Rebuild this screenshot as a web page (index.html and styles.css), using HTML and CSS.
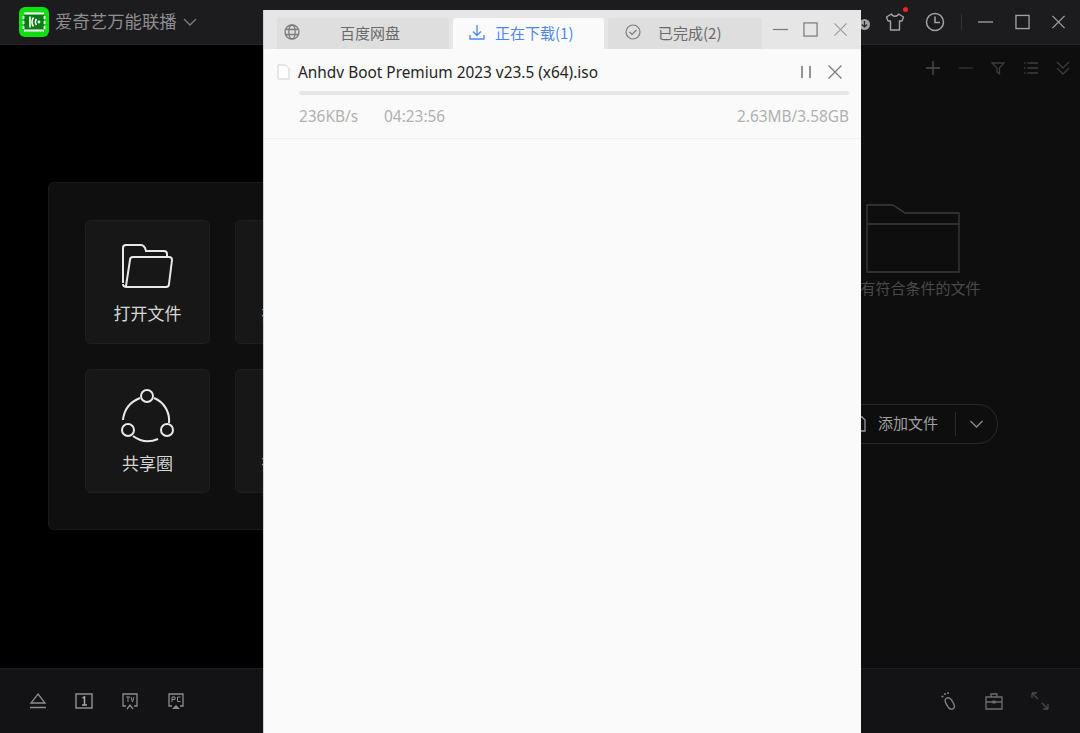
FILE: index.html
```html
<!DOCTYPE html>
<html lang="zh">
<head>
<meta charset="utf-8">
<title>爱奇艺万能联播</title>
<link rel="stylesheet" href="styles.css">
</head>
<body>
<div class="app">
  <header class="topbar">
    <div class="brand">
      <svg class="logo" viewBox="0 0 30 30"><rect width="30" height="30" rx="6" fill="#10e010"/><rect x="5" y="6" width="20" height="18" fill="#0a7a14"/><path d="M5 6.500H25M5 23.500H25" stroke="#fff" stroke-width="1.800"/><path d="M4.500 9V12M4.500 14V17M4.500 19V22M25.500 9V12M25.500 14V17M25.500 19V22" stroke="#fff" stroke-width="1.800"/><path d="M11 9.500V20.500M14.500 10.500C12.500 13 12.500 17 14.500 19.500M17.500 12C16 14 16 16 17.500 18" stroke="#fff" stroke-width="1.600" fill="none"/><circle cx="20" cy="15" r="1.400" fill="#fff"/></svg>
      <span class="brand-name">爱奇艺万能联播</span>
      <svg class="brand-caret" viewBox="0 0 14 8"><path d="M1 1L7 7L13 1" fill="none" stroke="#7d7d7d" stroke-width="1.300"/></svg>
    </div>
    <div class="top-actions">
      <svg class="ti dl-badge" viewBox="0 0 11 11"><circle cx="5.500" cy="5.500" r="5.500" fill="#a0a0a0"/><path d="M5.500 2V8M3 5.500L5.500 8L8 5.500" fill="none" stroke="#222" stroke-width="1.200"/></svg>
      <div class="shirt-wrap">
        <svg class="ti" viewBox="0 0 20 20"><path d="M6.500 2L1.500 5L3 9H5.500V18H14.500V9H17L18.500 5L13.500 2C12.500 5 7.500 5 6.500 2Z" fill="none" stroke="#a3a3a3" stroke-width="1.400" stroke-linejoin="round"/></svg>
        <span class="red-dot"></span>
      </div>
      <svg class="ti clock" viewBox="0 0 20 20"><circle cx="10" cy="10" r="8.500" fill="none" stroke="#a3a3a3" stroke-width="1.500"/><path d="M10 4.500V10.500H15" fill="none" stroke="#a3a3a3" stroke-width="1.500"/></svg>
      <span class="top-sep"></span>
      <svg class="ti min" viewBox="0 0 16 16"><path d="M0 8H16" stroke="#a3a3a3" stroke-width="1.400"/></svg>
      <svg class="ti max" viewBox="0 0 16 16"><rect x="1" y="1" width="14" height="14" fill="none" stroke="#a3a3a3" stroke-width="1.400"/></svg>
      <svg class="ti cls" viewBox="0 0 16 16"><path d="M1.500 1.500L14.500 14.500M14.500 1.500L1.500 14.500" stroke="#a3a3a3" stroke-width="1.300"/></svg>
    </div>
  </header>

  <main class="main">
    <section class="left">
      <div class="panel">
        <div class="card">
          <svg class="card-icon" viewBox="0 0 54 46"><path d="M3 40V5C3 3 4 2 6 2H21C23 2 24 3 25 5L26 8H44C46 8 47 9 47 11V13M3 41C3 43 5 44 7 44H46C48 44 49 43 49 41L52 17C52 15 51 14 49 14H13C11 14 10 15 10 17L6 43" fill="none" stroke="#e8e8e8" stroke-width="2"/></svg>
          <span class="card-label">打开文件</span>
        </div>
        <div class="card"><span class="card-spacer"></span><span class="card-label card-label-hidden">扫码投屏</span></div>
        <div class="card">
          <svg class="card-icon" viewBox="0 0 54 54"><g fill="none" stroke="#e8e8e8" stroke-width="2"><circle cx="27" cy="7" r="6"/><circle cx="8" cy="41" r="6"/><circle cx="47" cy="41" r="6"/><path d="M20 9C10 13 4 21 3 31M34 9C44 13 50 23 49 34M13 47C21 53 29 54 38 50"/></g></svg>
          <span class="card-label">共享圈</span>
        </div>
        <div class="card"><span class="card-spacer"></span><span class="card-label card-label-hidden">扫码投屏</span></div>
      </div>
    </section>

    <section class="right">
      <div class="tools">
        <svg class="tool" viewBox="0 0 16 16"><path d="M8 1V15M1 8H15" stroke="#4d4d4d" stroke-width="1.300"/></svg>
        <svg class="tool" viewBox="0 0 16 16"><path d="M1 8H15" stroke="#333" stroke-width="1.300"/></svg>
        <svg class="tool" viewBox="0 0 16 16"><path d="M2 3H14L9.500 8V14L7 12V8Z" fill="none" stroke="#3d3d3d" stroke-width="1.300"/></svg>
        <svg class="tool" viewBox="0 0 16 16"><path d="M4.500 3H15M4.500 8H15M4.500 13H15M1 3H2.500M1 8H2.500M1 13H2.500" stroke="#3d3d3d" stroke-width="1.300"/></svg>
        <svg class="tool" viewBox="0 0 16 16"><path d="M2 2L8 8L14 2M2 8L8 14L14 8" fill="none" stroke="#3d3d3d" stroke-width="1.300"/></svg>
      </div>
      <div class="empty">
        <svg class="empty-folder" viewBox="0 0 94 69"><path d="M1 1H27L39 9H93V68H1ZM1 20H93" fill="none" stroke="#3b3b3b" stroke-width="1.300"/></svg>
        <p class="empty-text">没有符合条件的文件</p>
        <div class="add-btn">
          <svg class="add-icon" viewBox="0 0 16 16"><path d="M3 1H10L13 4V15H3Z" fill="none" stroke="#9a9a9a" stroke-width="1.300"/></svg>
          <span class="add-label">添加文件</span>
          <span class="add-sep"></span>
          <svg class="add-caret" viewBox="0 0 14 8"><path d="M1 1L7 7L13 1" fill="none" stroke="#8c8c8c" stroke-width="1.300"/></svg>
        </div>
      </div>
    </section>
  </main>

  <footer class="bottombar">
    <div class="bottom-group">
      <svg class="bi" viewBox="0 0 20 18"><path d="M10 2L17 11H3ZM2 15.500H18" fill="none" stroke="#8c8c8c" stroke-width="1.300"/></svg>
      <svg class="bi" viewBox="0 0 20 18"><rect x="2" y="2" width="16" height="14" fill="none" stroke="#8c8c8c" stroke-width="1.500"/><path d="M8.500 6L10.500 5V13M8 13H13" fill="none" stroke="#a8a8a8" stroke-width="1.500"/></svg>
      <svg class="bi" viewBox="0 0 20 18"><path d="M6 14H3V2H17V14H14M7 17L10 13L13 17" fill="none" stroke="#8c8c8c" stroke-width="1.300"/><path d="M6 5H10M8 5V10M11 5L12.500 10L14 5" fill="none" stroke="#8c8c8c"/></svg>
      <svg class="bi" viewBox="0 0 20 18"><path d="M6 14H3V2H17V14H14" fill="none" stroke="#8c8c8c" stroke-width="1.300"/><path d="M6 17L10 13L14 17Z" fill="#8c8c8c"/><path d="M6 10V5H9V7.500H6M14.500 5H11.500V9.500H14.500" fill="none" stroke="#8c8c8c"/></svg>
    </div>
    <div class="bottom-group">
      <svg class="bi" viewBox="0 0 20 20"><path d="M8 7.500C6 9 7.500 12 9.500 15C11 18.500 14.500 19 16 17C17.500 15 15.500 12.500 14.500 10.500C13.500 8 10.500 5.500 8 7.500Z" fill="none" stroke="#7a7a7a" stroke-width="1.500"/><circle cx="7" cy="3" r="1.100" fill="#7a7a7a"/><circle cx="10" cy="2" r="1.100" fill="#7a7a7a"/><circle cx="4.500" cy="5.500" r="1.100" fill="#7a7a7a"/></svg>
      <svg class="bi" viewBox="0 0 20 20"><path d="M2 6H18V18H2ZM2 11H18M7 6V3H13V6" fill="none" stroke="#6e6e6e" stroke-width="1.300"/><rect x="8.500" y="9.500" width="3" height="3" fill="#6e6e6e"/></svg>
      <svg class="bi" viewBox="0 0 20 20"><path d="M2 2L8 8M2 2V7M2 2H7M18 18L12 12M18 18V13M18 18H13" fill="none" stroke="#4a4a4a" stroke-width="1.300"/></svg>
    </div>
  </footer>
</div>

<div class="window">
  <div class="titlebar">
    <div class="tab tab-one">
      <svg class="tab-icon" viewBox="0 0 16 16"><g fill="none" stroke="#7d7d7d" stroke-width="1.300"><circle cx="8" cy="8" r="7"/><ellipse cx="8" cy="8" rx="3.200" ry="7"/><path d="M1.500 5.500H14.500M1.500 10.500H14.500"/></g></svg>
      <span class="tab-text">百度网盘</span>
    </div>
    <div class="tab tab-active">
      <svg class="tab-icon" viewBox="0 0 16 16"><path d="M8 1V11M4 7.500L8 11.500L12 7.500M1 11V15H15V11" fill="none" stroke="#4d86f0" stroke-width="1.300"/></svg>
      <span class="tab-text">正在下载(1)</span>
    </div>
    <div class="tab tab-three">
      <svg class="tab-icon" viewBox="0 0 16 16"><circle cx="8" cy="8" r="7" fill="none" stroke="#7d7d7d" stroke-width="1.200"/><path d="M4.500 8L7 10.500L11.500 6" fill="none" stroke="#7d7d7d" stroke-width="1.200"/></svg>
      <span class="tab-text">已完成(2)</span>
    </div>
    <div class="win-controls">
      <svg class="wc" viewBox="0 0 16 16"><path d="M0 8H16" stroke="#7a7a7a" stroke-width="1.300"/></svg>
      <svg class="wc" viewBox="0 0 16 16"><rect x="1" y="1" width="14" height="14" fill="none" stroke="#7a7a7a" stroke-width="1.300"/></svg>
      <svg class="wc" viewBox="0 0 16 16"><path d="M1.500 1.500L14.500 14.500M14.500 1.500L1.500 14.500" stroke="#9a9a9a" stroke-width="1.200"/></svg>
    </div>
  </div>
  <div class="dl-item">
    <div class="dl-head">
      <svg class="dl-file" viewBox="0 0 13 16"><path d="M1 1H8.500L12 4.500V15H1Z" fill="#fff" stroke="#cfcfcf"/></svg>
      <span class="dl-name">Anhdv Boot Premium 2023 v23.5 (x64).iso</span>
      <svg class="dl-pause" viewBox="0 0 12 14"><path d="M2 1V13M10 1V13" stroke="#6a6a6a" stroke-width="1.400"/></svg>
      <svg class="dl-close" viewBox="0 0 16 16"><path d="M1.500 1.500L14.500 14.500M14.500 1.500L1.500 14.500" stroke="#7a7a7a" stroke-width="1.200"/></svg>
    </div>
    <div class="dl-body">
      <div class="progress"></div>
      <div class="dl-stats">
        <span class="dl-speed">236KB/s</span>
        <span class="dl-time">04:23:56</span>
        <span class="dl-size">2.63MB/3.58GB</span>
      </div>
    </div>
  </div>
</div>
</body>
</html>
```

FILE: styles.css
```css
* { box-sizing: border-box; }
html, body { margin: 0; height: 100%; overflow: hidden; background: #000; }
body { font-family: "Noto Sans", "Noto Sans CJK SC", sans-serif; position: relative; }
svg { display: block; flex: none; }

.app { display: flex; flex-direction: column; height: 733px; }

.topbar { height: 45px; flex: none; display: flex; align-items: center; justify-content: space-between; background: #1c1c1e; border-bottom: 1px solid #262628; padding: 0 14px 0 19px; }
.brand { display: flex; align-items: center; }
.logo { width: 30px; height: 30px; }
.brand-name { margin: 0 0 3px 6px; font-size: 17.400px; color: #8e8e8e; font-family: "Noto Sans CJK SC", sans-serif; }
.brand-caret { width: 14px; height: 8px; margin: 0 0 1px 6px; }
.top-actions { display: flex; align-items: center; }
.ti { width: 20px; height: 20px; }
.top-actions .dl-badge { width: 11px; height: 11px; margin: 4px 15px 0 0; }
.shirt-wrap { position: relative; }
.red-dot { position: absolute; right: -3px; top: -5px; width: 5px; height: 5px; border-radius: 50%; background: #e8262c; }
.top-actions .clock { margin-left: 20px; }
.top-sep { width: 1px; height: 16px; background: #333; margin-left: 16px; }
.top-actions .min { width: 15px; height: 16px; margin-left: 16px; }
.top-actions .max { width: 15px; height: 16px; margin-left: 22px; }
.top-actions .cls { width: 15px; height: 16px; margin-left: 21px; }

.main { flex: 1; min-height: 0; display: flex; }
.left { width: 746px; flex: none; background: #000; padding: 137px 0 0 48px; }
.panel { width: 349px; height: 348px; background: #0f0f0f; border: 1px solid #1a1a1a; border-radius: 6px; padding: 37px 36px; display: grid; grid-template-columns: 125px 125px; grid-auto-rows: 124px; gap: 25px; }
.card { background: #171717; border: 1px solid #1f1f1f; border-radius: 6px; display: flex; flex-direction: column; align-items: center; padding: 22px 2px 0 0; }
.card-icon { width: 54px; height: 46px; }
.card:nth-child(3) { padding: 19px 0 0; }
.card:nth-child(3) .card-icon { height: 54px; margin-left: -1px; }
.card-spacer { height: 46px; }
.card-label { margin: 13px -2px 0 0; font-size: 17px; line-height: 22px; color: #d6d6d6; font-family: "Noto Sans CJK SC", sans-serif; }
.card-label-hidden { font-size: 18px; }
.card:nth-child(3) .card-label { margin: 9px 0 0; }

.right { flex: 1; min-width: 0; background: #0e0e0e; display: flex; flex-direction: column; }
.tools { display: flex; justify-content: flex-end; gap: 16.500px; padding: 15px 9px 0 0; }
.tool { width: 16px; height: 16px; }
.empty { display: flex; flex-direction: column; align-items: center; padding-top: 128px; }
.empty-folder { width: 94px; height: 69px; }
.empty-text { margin: 4px 0 0; font-size: 15px; line-height: 22px; color: #4a4a4a; font-family: "Noto Sans CJK SC", sans-serif; }
.add-btn { margin-top: 105px; width: 170px; height: 40px; flex: none; border: 1px solid #2a2a2a; border-radius: 20px; display: flex; align-items: center; padding-left: 23px; }
.add-icon { width: 16px; height: 16px; }
.add-label { margin: 0 0 3px 10px; font-size: 15px; color: #a0a0a0; white-space: nowrap; font-family: "Noto Sans CJK SC", sans-serif; }
.add-sep { width: 1px; height: 24px; background: #2a2a2a; margin-left: 17px; }
.add-caret { width: 15px; height: 8px; margin-left: 13px; }

.bottombar { height: 65px; flex: none; background: #131315; border-top: 1px solid #1e1e20; display: flex; align-items: center; justify-content: space-between; padding: 0 30px 0 28px; }
.bottom-group { display: flex; align-items: center; gap: 26px; }
.bi { width: 20px; height: 20px; }

.window { position: absolute; left: 263px; top: 10px; width: 598px; height: 723px; background: #fafafa; border-left: 1px solid #cfcfcf; display: flex; flex-direction: column; }
.titlebar { height: 39px; flex: none; display: flex; align-items: flex-end; background: #e6e6e6; padding-left: 13px; }
.tab { height: 31px; padding-bottom: 3px; background: #dedede; border-radius: 3px 3px 0 0; display: flex; align-items: center; margin-right: 4px; font-size: 15px; color: #6a6a6a; font-family: "Noto Sans CJK SC", sans-serif; }
.tab-one { width: 172px; }
.tab-active { width: 151px; background: #fafafa; color: #4d86f0; }
.tab-three { width: 154px; }
.tab-icon { width: 16px; height: 16px; }
.tab-one .tab-icon { margin-left: 7px; }
.tab-one .tab-text { margin-left: 40px; }
.tab-active .tab-icon { margin-left: 16px; }
.tab-active .tab-text { margin-left: 10px; }
.tab-three .tab-icon { margin-left: 17px; }
.tab-three .tab-text { margin-left: 17px; }
.win-controls { align-self: flex-start; display: flex; gap: 15px; margin: 12px 0 0 7px; }
.wc { width: 15px; height: 15px; }

.dl-item { border-bottom: 1px solid #eeeeee; height: 90px; flex: none; }
.dl-head { display: flex; align-items: center; padding: 14px 18px 0 13px; }
.dl-file { width: 13px; height: 16px; }
.dl-name { margin: 2px 0 0 8px; flex: 1; font-size: 15.400px; line-height: 16px; color: #242424; }
.dl-pause { width: 12px; height: 14px; }
.dl-close { width: 16px; height: 16px; margin-left: 15px; }
.dl-body { padding: 10px 12px 0 35px; }
.progress { height: 4px; border-radius: 2px; background: #e6e6e6; }
.dl-stats { display: flex; margin-top: 11px; font-size: 15.400px; line-height: 22px; color: #b0b0b0; }
.dl-time { margin-left: 26px; }
.dl-size { margin-left: auto; }
```
